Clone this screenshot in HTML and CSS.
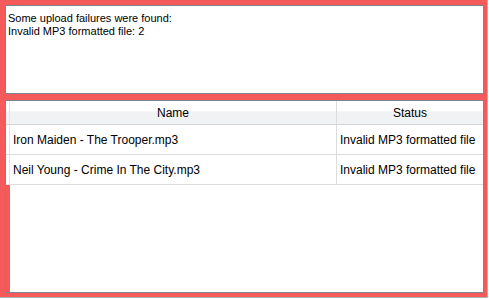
FILE: index.html
```html
<!DOCTYPE html>
<html lang="en">
<head>
<meta charset="UTF-8">
<title>Upload Results</title>
<link rel="stylesheet" href="styles.css">
</head>
<body>
    <div class="frame">
        <div class="messages">
            <p>Some upload failures were found:</p>
            <p>Invalid MP3 formatted file: 2</p>
        </div>
        <div class="results">
            <div class="grid">
                <div class="row header">
                    <div class="cell name">Name</div>
                    <div class="cell status">Status</div>
                </div>
                <div class="row">
                    <div class="cell name">Iron Maiden - The Trooper.mp3</div>
                    <div class="cell status">Invalid MP3 formatted file</div>
                </div>
                <div class="row">
                    <div class="cell name">Neil Young - Crime In The City.mp3</div>
                    <div class="cell status">Invalid MP3 formatted file</div>
                </div>
            </div>
        </div>
    </div>
</body>
</html>
```

FILE: styles.css
```css
body {
    margin: 0;
    background: #ffffff;
    font-family: "Liberation Sans", Arial, sans-serif;
    color: #000000;
}

.frame {
    box-sizing: border-box;
    width: 488px;
    height: 298px;
    padding: 5px 3px 4px 5px;
    background: #f45a5a;
    border-right: 1px solid #b4b4b4;
    border-bottom: 1px solid #b4b4b4;
    display: flex;
    flex-direction: column;
    gap: 6px;
}

.messages {
    box-sizing: border-box;
    height: 89px;
    border: 1px solid #7d8791;
    background: #ffffff;
    padding: 6px 2px;
    font-size: 11px;
    line-height: 12.5px;
}

.messages p {
    margin: 0;
}

.results {
    box-sizing: border-box;
    height: 193px;
    border: 1px solid #7d8791;
    background: #ffffff;
    display: flex;
}

.grid {
    flex: 1;
    border-left: 4px solid #f45a5a;
}

.row {
    display: flex;
    height: 29px;
    margin-left: -4px;
    padding-left: 3px;
    background: #ffffff;
    border-bottom: 1px solid #dcdcdc;
    font-size: 12px;
}

.row.header {
    height: 23px;
    border-bottom: 1px solid #d5d5d5;
    background: linear-gradient(#ffffff 0%, #ffffff 45%, #f1f2f4 46%, #f1f2f4 100%);
}

.cell {
    display: flex;
    align-items: center;
    padding: 0 3px;
    white-space: nowrap;
    overflow: hidden;
}

.cell.name {
    width: 320px;
    border-left: 1px solid #e6e6e6;
    border-right: 1px solid #dcdcdc;
}

.cell.status {
    flex: 1;
}

.header .cell {
    justify-content: center;
}
```
